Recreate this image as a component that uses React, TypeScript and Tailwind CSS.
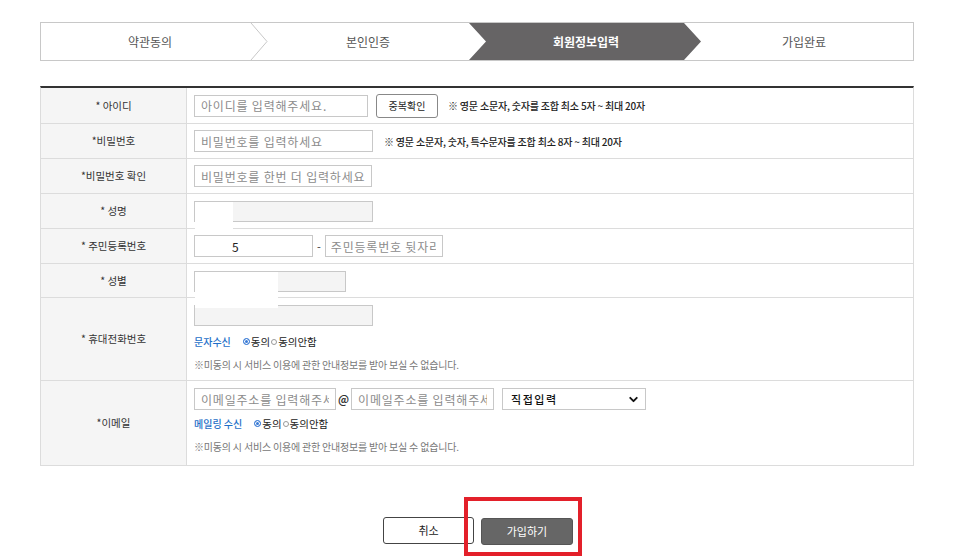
import { ChevronDown } from "lucide-react";

const font = { fontFamily: '"Noto Sans CJK KR", "Noto Sans", sans-serif' };

const inputCls =
  "h-[22px] border border-[#c8c8c8] bg-white px-[6px] text-[12px] tracking-[0.8px] text-[#222] outline-none placeholder:text-[#8c8c8c]";

function Radios() {
  return (
    <span className="flex items-center text-[10.5px] text-[#222]">
      <span className="mr-[1px] inline-block h-[7px] w-[7px] rounded-full border border-[#3a7bd5] bg-[#3a7bd5] ring-1 ring-inset ring-white" />
      동의
      <span className="mx-[1px] inline-block h-[6px] w-[6px] rounded-full border border-[#999] bg-white" />
      동의안함
    </span>
  );
}

function Row({ label, h, children }: { label: string; h: string; children: React.ReactNode }) {
  return (
    <div className={`flex border-b border-[#dcdcdc] ${h}`}>
      <div className="flex w-[146px] shrink-0 items-center justify-center border-r border-[#dcdcdc] bg-[#f5f5f5] text-[10.5px] text-[#333]">
        {label}
      </div>
      <div className="relative flex-1 pl-[7px]">{children}</div>
    </div>
  );
}

export default function App() {
  return (
    <div className="h-[558px] w-[953px] overflow-hidden bg-white" style={font}>
      <div className="ml-[40px] w-[874px] pt-[22px]">
        {/* Steps */}
        <div className="relative h-[39px] border border-[#c8c8c8]">
          <svg className="absolute inset-0 h-full w-full" viewBox="0 0 872 37" preserveAspectRatio="none">
            <polyline points="210,0 226,18.5 210,37" fill="none" stroke="#c8c8c8" strokeWidth="1" />
            <polygon points="428,0 643,0 660,18.5 643,37 428,37 445,18.5" fill="#666465" />
          </svg>
          <div className="relative flex h-full items-center text-[12px] text-[#555]">
            <div className="flex-1 text-center">약관동의</div>
            <div className="flex-1 text-center">본인인증</div>
            <div className="flex-1 text-center font-bold text-white">회원정보입력</div>
            <div className="flex-1 text-center">가입완료</div>
          </div>
        </div>

        {/* Form */}
        <div className="mt-[25px] border-t-2 border-r border-l border-[#dcdcdc] border-t-[#333]">
          <Row label="* 아이디" h="h-[36px]">
            <div className="flex h-full items-center">
              <input className={`${inputCls} w-[174px]`} placeholder="아이디를 입력해주세요." />
              <button className="ml-[8px] h-[24px] w-[62px] rounded-[3px] border border-[#888] bg-white text-[10px] text-[#222]">
                중복확인
              </button>
              <span className="ml-[10px] text-[10px] font-medium tracking-[-0.2px] text-[#222]">
                ※ 영문 소문자, 숫자를 조합 최소 5자 ~ 최대 20자
              </span>
            </div>
          </Row>
          <Row label="*비밀번호" h="h-[35px]">
            <div className="flex h-full items-center">
              <input className={`${inputCls} w-[179px]`} placeholder="비밀번호를 입력하세요" />
              <span className="ml-[11px] text-[10px] font-medium tracking-[-0.2px] text-[#222]">
                ※ 영문 소문자, 숫자, 특수문자를 조합 최소 8자 ~ 최대 20자
              </span>
            </div>
          </Row>
          <Row label="*비밀번호 확인" h="h-[35px]">
            <div className="flex h-full items-center">
              <input className={`${inputCls} w-[178px]`} placeholder="비밀번호를 한번 더 입력하세요" />
            </div>
          </Row>
          <Row label="* 성명" h="h-[35px]">
            <div className="flex h-full items-start pt-[7px]">
              <div className="h-[21px] w-[179px] border border-[#c8c8c8] bg-[#f4f4f4]" />
            </div>
            <span className="absolute top-[8px] left-[8px] z-10 h-[30px] w-[38px] bg-white" />
          </Row>
          <Row label="* 주민등록번호" h="h-[35px]">
            <div className="flex h-full items-center">
              <input className={`${inputCls} w-[119px] pl-[37px]`} defaultValue="5" />
              <span className="mx-[4px] text-[11px] text-[#333]">-</span>
              <input className={`${inputCls} w-[118px] pl-[5px]`} placeholder="주민등록번호 뒷자리를 입력하세요" />
            </div>
          </Row>
          <Row label="* 성별" h="h-[34px]">
            <div className="flex h-full items-start pt-[7px]">
              <div className="h-[21px] w-[152px] border border-[#c8c8c8] bg-[#f4f4f4]" />
            </div>
            <span className="absolute top-[8px] left-[8px] z-10 h-[36px] w-[83px] bg-white" />
          </Row>
          <Row label="* 휴대전화번호" h="h-[83px]">
            <div className="flex h-full flex-col pt-[7px]">
              <div className="h-[21px] w-[179px] border border-[#c8c8c8] bg-[#f4f4f4]" />
              <div className="mt-[8px] flex items-center text-[10px]">
                <span className="font-medium text-[#1e6fc8]">문자수신</span>
                <span className="ml-[12px]">
                  <Radios />
                </span>
              </div>
              <div className="mt-[7px] text-[10px] tracking-[-0.2px] text-[#777]">
                ※미동의 시 서비스 이용에 관한 안내정보를 받아 보실 수 없습니다.
              </div>
            </div>
          </Row>
          <Row label="*이메일" h="h-[85px]">
            <div className="flex h-full flex-col pt-[7px]">
              <div className="flex items-center">
                <input className={`${inputCls} w-[142px]`} placeholder="이메일주소를 입력해주세요" />
                <span className="mx-[2px] text-[11px] font-bold text-[#333]">@</span>
                <input className={`${inputCls} w-[143px]`} placeholder="이메일주소를 입력해주세요" />
                <div className="ml-[8px] flex h-[22px] w-[144px] items-center justify-between border border-[#c8c8c8] bg-white pr-[5px] pl-[8px]">
                  <span className="text-[11px] font-medium tracking-[1.5px] text-[#111]">직접입력</span>
                  <ChevronDown size={13} strokeWidth={3.5} className="text-[#111]" />
                </div>
              </div>
              <div className="mt-[6px] flex items-center text-[10px]">
                <span className="font-medium text-[#1e6fc8]">메일링 수신</span>
                <span className="ml-[12px]">
                  <Radios />
                </span>
              </div>
              <div className="mt-[7px] text-[10px] tracking-[-0.2px] text-[#777]">
                ※미동의 시 서비스 이용에 관한 안내정보를 받아 보실 수 없습니다.
              </div>
            </div>
          </Row>
        </div>

        {/* Buttons */}
        <div className="mt-[51px] flex justify-center gap-[7px] pl-[2px]">
          <button className="h-[27px] w-[91px] rounded-[3px] border border-[#444] bg-white text-[11px] text-[#222]">
            취소
          </button>
          <div className="relative">
            <button className="h-[27px] w-[92px] rounded-[3px] border border-[#555] bg-[#666] text-[11px] text-white">
              가입하기
            </button>
            <span className="absolute -top-[20px] -right-[9px] -bottom-[11px] -left-[17px] border-4 border-[#e3202a]" />
          </div>
        </div>
      </div>
    </div>
  );
}
